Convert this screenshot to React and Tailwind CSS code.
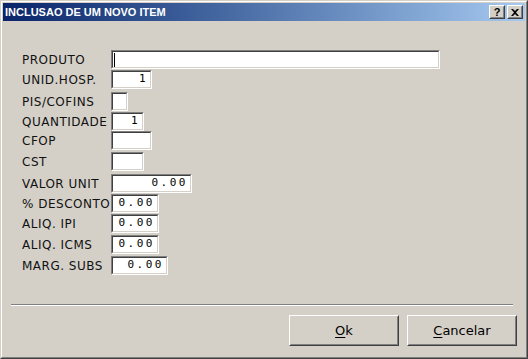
import React from 'react'

const rows = [
  { label: 'PRODUTO', box: 'w-[329px]', row: 'h-[20px]', value: '', caret: true },
  { label: 'UNID.HOSP.', box: 'w-[41px]', row: 'h-[22px]', value: '1' },
  { label: 'PIS/COFINS', box: 'w-[17px]', row: 'h-[20px]', value: '' },
  { label: 'QUANTIDADE', box: 'w-[33px]', row: 'h-[19px]', value: '1' },
  { label: 'CFOP', box: 'w-[41px]', row: 'h-[21px]', value: '' },
  { label: 'CST', box: 'w-[33px]', row: 'h-[22px]', value: '' },
  { label: 'VALOR UNIT', box: 'w-[81px]', row: 'h-[20px]', value: '0.00' },
  { label: '% DESCONTO', box: 'w-[48px]', row: 'h-[20px]', value: '0.00' },
  { label: 'ALIQ. IPI', box: 'w-[48px]', row: 'h-[21px]', value: '0.00' },
  { label: 'ALIQ. ICMS', box: 'w-[48px]', row: 'h-[21px]', value: '0.00' },
  { label: 'MARG. SUBS', box: 'w-[57px]', row: 'h-[19px]', value: '0.00' },
]

const CaptionButton = ({ children }) => (
  <div className="w-[16px] h-[14px] bg-[#d4d0c8] border border-t-white border-l-white border-r-[#404040] border-b-[#404040]">
    <div className="w-full h-full flex items-center justify-center border border-t-[#d4d0c8] border-l-[#d4d0c8] border-r-[#808080] border-b-[#808080]">
      {children}
    </div>
  </div>
)

const Field = ({ r }) => (
  <div className={`flex items-start ${r.row}`}>
    <div className="w-[89px] shrink-0 h-[19px] flex items-center whitespace-nowrap text-[12px] tracking-[0.5px] text-[#111] font-['DejaVu_Sans',sans-serif]">
      {r.label}
    </div>
    <div
      className={`${r.box} h-[19px] bg-white border border-t-[#808080] border-l-[#808080] border-r-white border-b-white`}
    >
      <div className="w-full h-full border border-t-[#404040] border-l-[#404040] border-r-[#d4d0c8] border-b-[#d4d0c8] flex items-center justify-end pr-[2px] relative">
        {r.caret && <span className="absolute left-[1px] top-[1px] w-px h-[14px] bg-black" />}
        <span className="text-[11px] tracking-[2.5px] text-black font-['DejaVu_Sans_Mono',monospace]">
          {r.value}
        </span>
      </div>
    </div>
  </div>
)

const Button = ({ hot, rest }) => (
  <div className="w-[110px] h-[31px] bg-[#d4d0c8] border border-t-white border-l-white border-r-[#404040] border-b-[#404040]">
    <div className="w-full h-full flex items-center justify-center border border-t-[#d4d0c8] border-l-[#d4d0c8] border-r-[#808080] border-b-[#808080] text-[13px] text-black font-['DejaVu_Sans',sans-serif]">
      <span className="underline underline-offset-2">{hot}</span>
      {rest}
    </div>
  </div>
)

export default function App() {
  return (
    <div className="w-[528px] h-[359px] bg-[#d4d0c8] border border-t-[#d4d0c8] border-l-[#d4d0c8] border-r-[#404040] border-b-[#404040]">
      <div className="w-full h-full border border-t-white border-l-white border-r-[#808080] border-b-[#808080] p-px flex flex-col">
        <div className="h-[18px] shrink-0 flex items-center justify-between pl-[2px] pr-[2px] bg-gradient-to-r from-[#0a246a] to-[#a6caf0]">
          <span className="text-[11px] font-bold text-white font-['Liberation_Sans',sans-serif] leading-none">
            INCLUSAO DE UM NOVO ITEM
          </span>
          <div className="flex gap-[2px]">
            <CaptionButton>
              <span className="text-[11px] font-bold leading-none text-black font-['Liberation_Sans',sans-serif]">?</span>
            </CaptionButton>
            <CaptionButton>
              <svg width="8" height="7" viewBox="0 0 8 7">
                <path d="M0 0h2l2 2 2-2h2L5 3.5 8 7H6L4 5 2 7H0l3-3.5z" fill="#000" />
              </svg>
            </CaptionButton>
          </div>
        </div>

        <div className="flex-1 flex flex-col pl-[19px] pt-[29px]">
          {rows.map(r => (
            <Field key={r.label} r={r} />
          ))}
        </div>

        <div className="ml-[8px] mr-[12px] h-[2px] border-t border-t-[#808080] border-b border-b-white" />

        <div className="h-[50px] shrink-0 flex justify-end gap-[8px] pt-[9px] pr-[8px]">
          <Button hot="O" rest="k" />
          <Button hot="C" rest="ancelar" />
        </div>
      </div>
    </div>
  )
}
